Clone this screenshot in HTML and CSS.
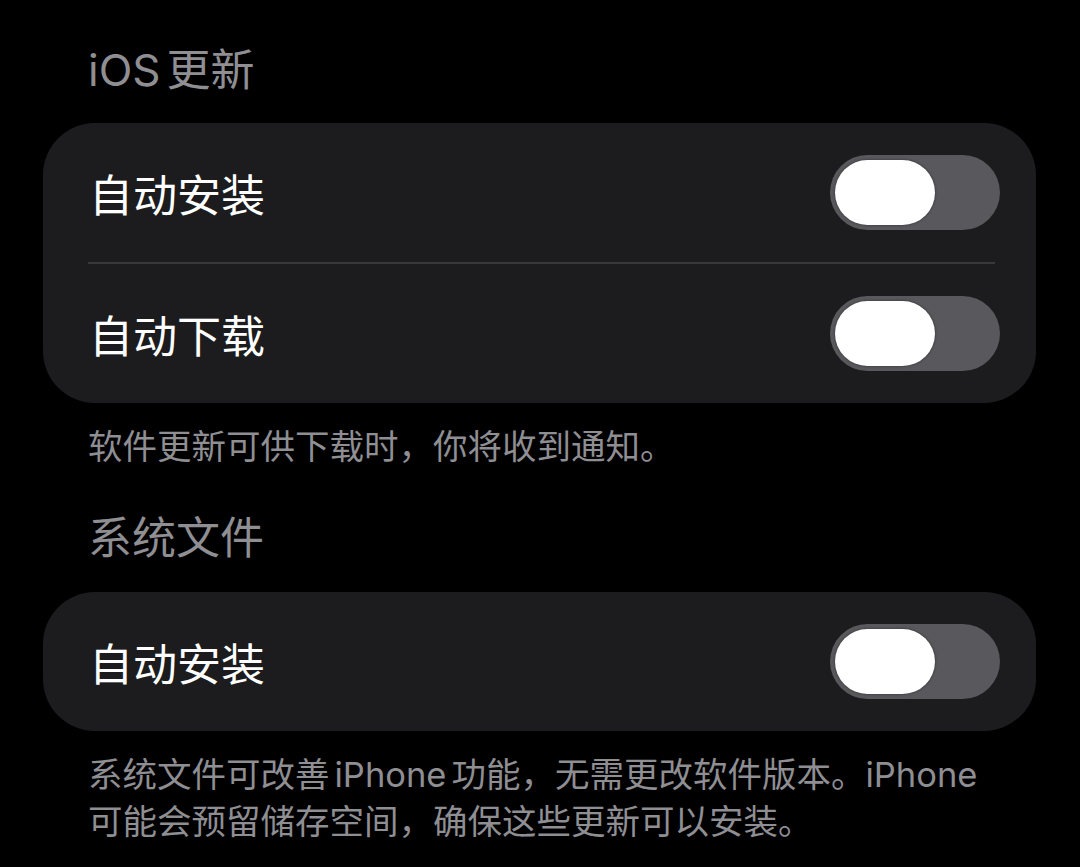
FILE: index.html
```html
<!DOCTYPE html>
<html lang="zh-CN">
<head>
    <meta charset="UTF-8">
    <meta name="viewport" content="width=device-width, initial-scale=1.0">
    <title>软件更新</title>
    <link rel="stylesheet" href="styles.css">
</head>
<body>
    <div class="settings">
        <div class="group-title"><span class="latin">iOS</span>更新</div>
        <div class="card">
            <div class="row">
                <span class="label">自动安装</span>
                <div class="switch"><div class="knob"></div></div>
            </div>
            <div class="divider"></div>
            <div class="row">
                <span class="label">自动下载</span>
                <div class="switch"><div class="knob"></div></div>
            </div>
        </div>
        <p class="group-footer">软件更新可供下载时，你将收到通知。</p>

        <div class="group-title second">系统文件</div>
        <div class="card">
            <div class="row">
                <span class="label">自动安装</span>
                <div class="switch"><div class="knob"></div></div>
            </div>
        </div>
        <p class="group-footer">系统文件可改善<span class="latin">iPhone</span>功能，无需更改软件版本。iPhone<br>可能会预留储存空间，确保这些更新可以安装。</p>
    </div>
</body>
</html>
```

FILE: styles.css
```css
body {
    margin: 0;
    background-color: #000;
    font-family: Inter, "Noto Sans CJK SC", sans-serif;
}

.settings {
    padding: 40px 44px 0 43px;
}

/* small gap between Latin words and CJK text */
.latin {
    margin: 0 5px;
}

.group-title {
    font-size: 44px;
    line-height: 60px;
    color: #8e8e93;
    padding-left: 45px;
    margin-bottom: 23px;
}

.group-title .latin {
    margin: 0 6px 0 0;
}

.group-title.second {
    margin-top: 38px;
    margin-bottom: 24px;
}

.card {
    background-color: #1c1c1e;
    border-radius: 52px;
}

.row {
    height: 139px;
    display: flex;
    align-items: center;
    justify-content: space-between;
    padding: 0 36px 0 46px;
}

.label {
    font-size: 44px;
    color: #fff;
}

.divider {
    height: 2px;
    margin: 0 41px 0 45px;
    background-color: #38383a;
}

.switch {
    width: 170px;
    height: 75px;
    border-radius: 38px;
    background-color: #58585d;
    padding: 5px;
    box-sizing: border-box;
}

.knob {
    width: 100px;
    height: 65px;
    border-radius: 33px;
    background-color: #fff;
    box-shadow: 0 0 3px rgba(0, 0, 0, 0.45);
}

.group-footer {
    margin: 20px 0 0;
    padding-left: 45px;
    font-size: 34.5px;
    line-height: 47px;
    color: #8e8e93;
}
```
